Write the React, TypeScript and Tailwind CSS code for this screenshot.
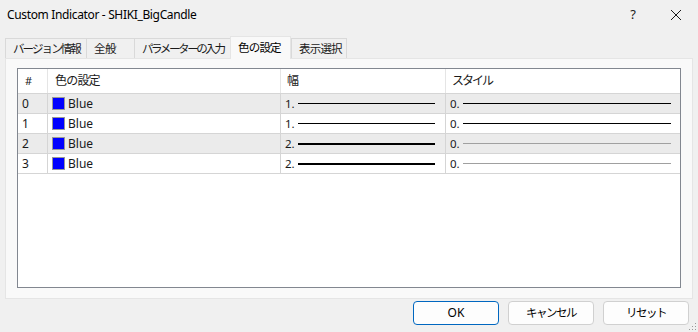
const font = { fontFamily: '"Noto Sans", "Noto Sans CJK JP", sans-serif' };

const tabs = [
  { label: "バージョン情報", w: "w-[82px]", tr: "tracking-[-1.9px]" },
  { label: "全般", w: "w-[49px]", tr: "tracking-[-0.5px]" },
  { label: "パラメーターの入力", w: "w-[97px]", tr: "tracking-[-2.4px]" },
  { label: "色の設定", w: "w-[61px]", tr: "tracking-[-0.8px]", active: true },
  { label: "表示選択", w: "w-[56px]", tr: "tracking-[-0.8px]" },
];

const rows = [
  { n: "0", width: 1, styleColor: "bg-black" },
  { n: "1", width: 1, styleColor: "bg-black" },
  { n: "2", width: 2, styleColor: "bg-[#a0a0a0]" },
  { n: "3", width: 2, styleColor: "bg-[#a0a0a0]" },
];

const cols = "grid grid-cols-[30px_233px_165px_1fr]";

export default function App() {
  return (
    <div
      className="w-[698px] h-[332px] bg-[#f0f0f0] flex flex-col text-[12px] text-[#1a1a1a] overflow-hidden relative"
      style={font}
    >
      {/* title bar */}
      <div className="h-[30px] flex items-center pl-[7px] pr-[16px]">
        <span className="flex-1 text-[12px] tracking-[-0.35px] text-black">Custom Indicator - SHIKI_BigCandle</span>
        <span className="w-[14px] text-center text-[13px] mr-[30px]">?</span>
        <svg width="12" height="12" viewBox="0 0 12 12">
          <path d="M1 1 L11 11 M11 1 L1 11" stroke="#1a1a1a" strokeWidth="1" />
        </svg>
      </div>

      {/* tabs */}
      <div className="flex items-end px-[5px] mt-[6px] h-[22px] text-[11.5px] whitespace-nowrap">
        {tabs.map((t) =>
          t.active ? (
            <div
              key={t.label}
              className={`${t.w} ${t.tr} h-[23px] -mb-[1px] pl-[7px] bg-[#f9f9f9] border border-b-0 border-[#e5e5e5] flex items-center text-black relative z-10`}
            >
              {t.label}
            </div>
          ) : (
            <div
              key={t.label}
              className={`${t.w} ${t.tr} h-[20px] pl-[7px] bg-[#f0f0f0] border border-b-0 border-[#d9d9d9] -mr-[1px] flex items-center overflow-hidden`}
            >
              {t.label}
            </div>
          )
        )}
      </div>

      {/* panel */}
      <div className="mx-[5px] w-[688px] h-[241px] bg-[#f9f9f9] border border-[#e5e5e5] pt-[9px] px-[11px] pb-[10px]">
        <div className="h-full bg-white border border-[#828790] flex flex-col">
          {/* header */}
          <div className={`${cols} h-[25px] border-b border-[#d5d5d5]`}>
            <div className="flex items-center pl-[7px] text-[11px] border-r border-[#e5e5e5]">#</div>
            <div className="flex items-center pl-[7px] tracking-[-0.8px] border-r border-[#e5e5e5]">色の設定</div>
            <div className="flex items-center pl-[6px] border-r border-[#e5e5e5]">幅</div>
            <div className="flex items-center pl-[6px] tracking-[-2px]">スタイル</div>
          </div>
          {rows.map((r, i) => (
            <div
              key={r.n}
              className={`${cols} h-[20px] border-b border-[#d5d5d5] ${i % 2 === 0 ? "bg-[#ebebeb]" : "bg-white"}`}
            >
              <div className="flex items-center pl-[4px] border-r border-[#d5d5d5]">{r.n}</div>
              <div className="flex items-center pl-[4px] border-r border-[#d5d5d5]">
                <span className="w-[13px] h-[13px] bg-[#0000ff] border border-[#999] mr-[3px]" />
                Blue
              </div>
              <div className="flex items-center pl-[4px] pr-[10px] border-r border-[#d5d5d5]">
                <span className="text-[11.5px] w-[13px]">{r.width}.</span>
                <span className={`flex-1 bg-black ${r.width === 2 ? "h-[2px]" : "h-[1px]"}`} />
              </div>
              <div className="flex items-center pl-[4px] pr-[9px]">
                <span className="text-[11.5px] w-[13px]">0.</span>
                <span className={`flex-1 h-[1px] ${r.styleColor}`} />
              </div>
            </div>
          ))}
        </div>
      </div>

      {/* buttons */}
      <div className="flex justify-end gap-[9px] pr-[9px] mt-[2px] whitespace-nowrap">
        <button className="w-[86px] h-[24px] rounded-[4px] bg-[#fdfdfd] border border-[#0067c0] text-black">
          OK
        </button>
        <button className="w-[86px] h-[24px] rounded-[4px] bg-[#fdfdfd] border border-[#d0d0d0] text-black text-[11.5px] tracking-[-1.5px]">
          キャンセル
        </button>
        <button className="w-[86px] h-[24px] rounded-[4px] bg-[#fdfdfd] border border-[#d0d0d0] text-black text-[11.5px] tracking-[-1.5px]">
          リセット
        </button>
      </div>

      {/* resize grip */}
      <svg width="8" height="8" viewBox="0 0 8 8" className="absolute right-[1px] bottom-[1px]">
        <rect x="6" y="0" width="1" height="1" fill="#999" />
        <rect x="3" y="3" width="1" height="1" fill="#999" />
        <rect x="6" y="3" width="1" height="1" fill="#999" />
        <rect x="0" y="6" width="1" height="1" fill="#999" />
        <rect x="3" y="6" width="1" height="1" fill="#999" />
        <rect x="6" y="6" width="1" height="1" fill="#999" />
      </svg>
    </div>
  );
}
